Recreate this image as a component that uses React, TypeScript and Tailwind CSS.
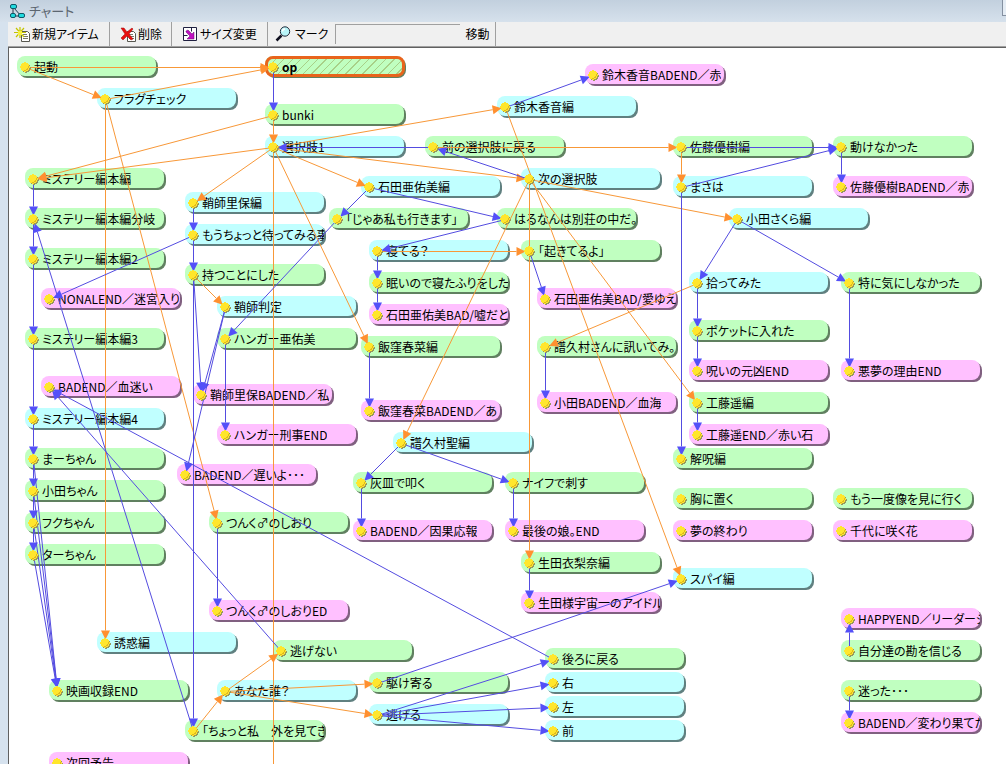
import { useState } from 'react';
import type { ReactNode } from 'react';
import clsx from 'clsx';

type Tone = 'green' | 'cyan' | 'pink';

// id, label, tone, column, row (the chart snaps to an 8px grid)
type Item = [string, string, Tone, number, number];

const GRID = 8;

const items: Item[] = [
  ['start', '起動', 'green', 2, 2],
  ['flag', 'フラグチェック', 'cyan', 12, 6],
  ['op', 'op', 'green', 33, 2],
  ['bunki', 'bunki', 'green', 33, 8],
  ['select1', '選択肢1', 'cyan', 33, 12],
  ['prev', '前の選択肢に戻る', 'green', 53, 12],
  ['suzukiBad', '鈴木香音BADEND／赤', 'pink', 73, 3],
  ['suzuki', '鈴木香音編', 'cyan', 62, 7],
  ['sato', '佐藤優樹編', 'green', 84, 12],
  ['masaha', 'まさは', 'cyan', 84, 17],
  ['stay', '動けなかった', 'green', 104, 12],
  ['satoBad', '佐藤優樹BADEND／赤', 'pink', 104, 17],
  ['mystery1', 'ミステリー編本編', 'green', 3, 16],
  ['mysteryFork', 'ミステリー編本編分岐', 'green', 3, 21],
  ['mystery2', 'ミステリー編本編2', 'green', 3, 26],
  ['nonal', 'NONALEND／迷宮入り', 'pink', 5, 31],
  ['mystery3', 'ミステリー編本編3', 'green', 3, 36],
  ['chimayoi', 'BADEND／血迷い', 'pink', 5, 42],
  ['mystery4', 'ミステリー編本編4', 'cyan', 3, 46],
  ['maa', 'まーちゃん', 'green', 3, 51],
  ['oda', '小田ちゃん', 'green', 3, 55],
  ['fuku', 'フクちゃん', 'green', 3, 59],
  ['taa', 'ターちゃん', 'green', 3, 63],
  ['movie', '映画収録END', 'green', 6, 80],
  ['sayashi', '鞘師里保編', 'cyan', 23, 19],
  ['wait', 'もうちょっと待ってみる事', 'cyan', 23, 23],
  ['hold', '持つことにした', 'green', 23, 28],
  ['judge', '鞘師判定', 'cyan', 27, 32],
  ['hanger', 'ハンガー亜佑美', 'green', 27, 36],
  ['sayashiBad', '鞘師里保BADEND／私', 'pink', 24, 43],
  ['hangerEnd', 'ハンガー刑事END', 'pink', 27, 48],
  ['late', 'BADEND／遅いよ･･･', 'pink', 22, 53],
  ['tsunku', 'つんく♂のしおり', 'green', 26, 59],
  ['tsunkuEnd', 'つんく♂のしおりED', 'pink', 26, 70],
  ['tempt', '誘惑編', 'cyan', 12, 74],
  ['noEscape', '逃げない', 'green', 34, 75],
  ['who', 'あなた誰？', 'cyan', 27, 80],
  ['outside', '「ちょっと私　外を見てき', 'green', 23, 85],
  ['next', '次回予告', 'pink', 6, 89],
  ['ishida', '石田亜佑美編', 'cyan', 45, 17],
  ['metoo', '「じゃあ私も行きます」', 'green', 41, 21],
  ['asleep', '寝てる？', 'cyan', 46, 25],
  ['pretend', '眠いので寝たふりをした', 'green', 46, 29],
  ['ishidaBad1', '石田亜佑美BAD/嘘だと', 'pink', 46, 33],
  ['iikubo', '飯窪春菜編', 'green', 45, 37],
  ['iikuboBad', '飯窪春菜BADEND／あ', 'pink', 45, 45],
  ['fukumura', '譜久村聖編', 'cyan', 49, 49],
  ['ashtray', '灰皿で叩く', 'green', 44, 54],
  ['karma', 'BADEND／因果応報', 'pink', 44, 60],
  ['knife', 'ナイフで刺す', 'green', 63, 54],
  ['lastGirl', '最後の娘。END', 'pink', 63, 60],
  ['select2', '次の選択肢', 'cyan', 65, 16],
  ['villa', 'はるなんは別荘の中だ。', 'green', 62, 21],
  ['awake', '「起きてるよ」', 'green', 65, 25],
  ['ishidaBad2', '石田亜佑美BAD/愛ゆえ', 'pink', 67, 31],
  ['ask', '譜久村さんに訊いてみ。', 'green', 67, 37],
  ['odaBad', '小田BADEND／血海', 'pink', 67, 44],
  ['ikuta', '生田衣梨奈編', 'green', 65, 64],
  ['ikutaEnd', '生田様宇宙一のアイドル', 'pink', 65, 69],
  ['back', '後ろに戻る', 'green', 68, 76],
  ['right', '右', 'cyan', 68, 79],
  ['left', '左', 'cyan', 68, 82],
  ['front', '前', 'cyan', 68, 85],
  ['rush', '駆け寄る', 'green', 46, 79],
  ['escape', '逃げる', 'cyan', 46, 83],
  ['sakura', '小田さくら編', 'cyan', 91, 21],
  ['pickup', '拾ってみた', 'cyan', 86, 29],
  ['pocket', 'ポケットに入れた', 'green', 86, 35],
  ['curse', '呪いの元凶END', 'pink', 86, 40],
  ['kudo', '工藤遥編', 'green', 86, 44],
  ['kudoEnd', '工藤遥END／赤い石', 'pink', 86, 48],
  ['uncurse', '解呪編', 'green', 84, 51],
  ['chest', '胸に置く', 'green', 84, 56],
  ['dreamEnd', '夢の終わり', 'pink', 84, 60],
  ['statue', 'もう一度像を見に行く', 'green', 104, 56],
  ['flower', '千代に咲く花', 'pink', 104, 60],
  ['spy', 'スパイ編', 'cyan', 84, 66],
  ['ignore', '特に気にしなかった', 'green', 105, 29],
  ['nightmare', '悪夢の理由END', 'pink', 105, 40],
  ['happy', 'HAPPYEND／リーダーシ', 'pink', 105, 71],
  ['believe', '自分達の勘を信じる', 'green', 105, 75],
  ['lost', '迷った･･･', 'green', 105, 80],
  ['ruin', 'BADEND／変わり果てた', 'pink', 105, 84],
];

// conditional jumps
const orangeLinks = [
  'start>op', 'start>flag', 'flag>op', 'flag>tempt', 'flag>tsunku',
  'bunki>mystery1', 'bunki>select1',
  'select1>mystery1', 'select1>sayashi', 'select1>ishida', 'select1>iikubo',
  'select1>suzuki', 'select1>select2', 'select1>sato',
  'suzuki>spy', 'select2>sakura', 'select2>fukumura', 'select2>ikuta', 'select2>kudo',
  'asleep>awake', 'pickup>ask', 'sato>masaha', 'hold>judge',
  'outside>who', 'who>noEscape', 'who>rush', 'who>escape',
];

// plain jumps
const blueLinks = [
  'op>bunki', 'prev>select1', 'select2>prev', 'suzuki>suzukiBad',
  'sato>stay', 'masaha>stay', 'stay>satoBad', 'masaha>uncurse',
  'mystery1>mysteryFork', 'mysteryFork>mystery2', 'mystery2>mystery3', 'mystery3>mystery4',
  'mystery4>maa', 'maa>oda', 'oda>fuku', 'fuku>taa',
  'maa>movie', 'oda>movie', 'fuku>movie', 'taa>movie',
  'outside>mysteryFork', 'wait>nonal', 'sayashi>wait', 'wait>hold',
  'hold>outside', 'hold>sayashiBad', 'judge>sayashiBad', 'judge>late',
  'metoo>hanger', 'hanger>hangerEnd', 'tsunku>tsunkuEnd',
  'ishida>metoo', 'ishida>villa', 'villa>asleep', 'asleep>pretend', 'pretend>ishidaBad1',
  'awake>ishidaBad2', 'iikubo>iikuboBad', 'ask>odaBad',
  'fukumura>ashtray', 'fukumura>knife', 'ashtray>karma', 'knife>lastGirl',
  'ikuta>ikutaEnd', 'sakura>pickup', 'sakura>ignore', 'ignore>nightmare',
  'pickup>pocket', 'pocket>curse', 'kudo>kudoEnd',
  'noEscape>chimayoi', 'back>chimayoi', 'rush>spy',
  'escape>back', 'escape>right', 'escape>left', 'escape>front',
  'believe>happy', 'lost>ruin',
];

const toneClass: Record<Tone, string> = {
  green: 'bg-[#c0ffc0] shadow-[2px_2px_0_#608060]',
  cyan: 'bg-[#c0ffff] shadow-[2px_2px_0_#608080]',
  pink: 'bg-[#ffc0ff] shadow-[2px_2px_0_#806080]',
};

const dotOf = new Map(items.map(([id, , , col, row]) => [id, { x: col * GRID, y: row * GRID + 3 }]));

function Link({ link, color, head }: { link: string; color: string; head: string }) {
  const [from, to] = link.split('>');
  const a = dotOf.get(from)!;
  const b = dotOf.get(to)!;
  const len = Math.hypot(b.x - a.x, b.y - a.y);
  const ux = (b.x - a.x) / len;
  const uy = (b.y - a.y) / len;
  const tip = { x: b.x + 0.5 - ux * 4, y: b.y + 0.5 - uy * 4 };
  const base = { x: tip.x - ux * 9, y: tip.y - uy * 9 };
  return (
    <g>
      <line x1={a.x + 0.5} y1={a.y + 0.5} x2={base.x} y2={base.y} stroke={color} />
      <polygon
        fill={head}
        points={`${tip.x},${tip.y} ${base.x - uy * 4.5},${base.y + ux * 4.5} ${base.x + uy * 4.5},${base.y - ux * 4.5}`}
      />
    </g>
  );
}

function Chart() {
  const [selected, setSelected] = useState('op');

  return (
    <main className="relative flex-1 overflow-hidden border-l border-t border-[#606060] bg-white">
      {items.map(([id, label, tone, col, row]) => (
        <button
          key={id}
          onClick={() => setSelected(id)}
          className={clsx(
            'absolute flex h-5 w-[139px] items-center rounded-lg pl-[17px] pt-0.5 text-left',
            toneClass[tone],
            selected === id && 'font-bold'
          )}
          style={{ left: (col - 1) * GRID, top: (row - 1) * GRID }}
        >
          {selected === id && (
            <span className="absolute -right-px -bottom-px left-0 top-0 rounded-lg border-3 border-[#e8641c] bg-[repeating-linear-gradient(135deg,transparent_0px,transparent_5px,#a8d088_5px,#a8d088_6px)]" />
          )}
          <span className="relative overflow-hidden whitespace-nowrap leading-4">{label}</span>
        </button>
      ))}

      <svg className="pointer-events-none absolute inset-0 h-full w-full">
        {/* leaves the visible part of the chart */}
        <line x1="264.5" y1="99" x2="264.5" y2="2000" stroke="#f89838" />
        {orangeLinks.map((link) => (
          <Link key={link} link={link} color="#f89838" head="#ff9030" />
        ))}
        {blueLinks.map((link) => (
          <Link key={link} link={link} color="#544ce0" head="#5450f8" />
        ))}
        <defs>
          <path id="dot" d="M-1-5h2v1h2v1h1v2h1v2h-1v2h-1v1h-2v1h-2v-1h-2v-1h-1v-2h-1v-2h1v-2h1v-1h2z" />
        </defs>
        {items.map(([id]) => {
          const { x, y } = dotOf.get(id)!;
          return (
            <g key={id} shapeRendering="crispEdges">
              <use href="#dot" x={x + 1} y={y + 1} fill="#98985c" />
              <use href="#dot" x={x} y={y} fill="#ffe62c" />
              <path d={`M${x - 1} ${y + 3}h2v-1h1v-1h1v-2h1v2h-1v2h-2v1h-2z`} fill="#e0b820" />
            </g>
          );
        })}
      </svg>
    </main>
  );
}

function ChartIcon() {
  return (
    <svg width="16" height="16" viewBox="0 0 16 16" aria-hidden="true">
      <path d="M4 4v8M5 5l7 8M4 13h9" stroke="#203848" fill="none" />
      <g fill="#20dce0" stroke="#105868">
        <rect x="1.5" y="1.5" width="6" height="4" rx="1.5" />
        <rect x="1.5" y="10.5" width="5" height="4" rx="1.5" />
        <rect x="9.5" y="10.5" width="6" height="4" rx="1.5" />
      </g>
    </svg>
  );
}

function PageShape() {
  return (
    <g>
      <path d="M7.5 5.5h6l2 2v8h-8z" fill="#fff" stroke="#585850" />
      <path d="M9 8.5h4M9 10.5h5M9 12.5h5" stroke="#787868" fill="none" />
    </g>
  );
}

function NewIcon() {
  return (
    <svg width="16" height="16" viewBox="0 0 16 16" aria-hidden="true">
      <PageShape />
      <path d="M6 1v11M0 6.5h12M2 2l8 9M10 2l-8 9" stroke="#c4c400" strokeWidth="1.2" fill="none" />
      <path d="M4 5h4v4H4z" fill="#f8f040" />
    </svg>
  );
}

function DeleteIcon() {
  return (
    <svg width="16" height="16" viewBox="0 0 16 16" aria-hidden="true">
      <PageShape />
      <path d="M1 2l3 0 3 4 5-4 1 1-4 5 4 5-2 1-4-4-4 4-2-2 4-4z" fill="#e81010" stroke="#a00808" strokeWidth="0.5" />
    </svg>
  );
}

function ResizeIcon() {
  return (
    <svg width="16" height="16" viewBox="0 0 16 16" aria-hidden="true">
      <path d="M1.5 1.5h13v13h-13z" fill="#fff" stroke="#202040" />
      <path d="M1.5 9.5h4M9.5 1.5v4" stroke="#202040" />
      <path d="M4 5l2-1 4 4 2-2v7H5l2-2 1-1-4-4z" fill="#c010c0" stroke="#600870" strokeWidth="0.5" />
    </svg>
  );
}

function SearchIcon() {
  return (
    <svg width="16" height="16" viewBox="0 0 16 16" aria-hidden="true">
      <path d="M1.5 14.5l5-5" stroke="#101020" strokeWidth="2.5" />
      <circle cx="10" cy="5.5" r="4.7" fill="#b8f4f8" stroke="#202838" />
      <path d="M7.5 5.5a2.5 2.5 0 0 1 2.5-2.5" stroke="#fff" strokeWidth="1.5" fill="none" />
    </svg>
  );
}

function ToolButton({ icon, label, className }: { icon: ReactNode; label: string; className: string }) {
  return (
    <button className={clsx('flex h-full items-center gap-0.5 whitespace-nowrap border-r border-[#a0a0a0]', className)}>
      {icon}
      {label}
    </button>
  );
}

export default function App() {
  return (
    <div className="flex h-screen flex-col overflow-hidden bg-[#d6e2ee] font-['Noto_Sans_CJK_JP',sans-serif] text-xs text-black [font-feature-settings:'palt']">
      <header className="flex h-[22px] shrink-0 items-center justify-between bg-linear-to-b from-[#c2d0de] to-[#d6e1ec] pl-[9px]">
        <h1 className="flex items-center gap-1 text-[13px] text-[#5c6670]">
          <ChartIcon />
          チャート
        </h1>
        <button aria-label="閉じる" className="h-4 w-1 self-start border-b border-l border-[#8490a0] bg-[#e4ecf4]" />
      </header>

      <div className="ml-2 flex min-h-0 flex-1 flex-col">
        <div className="flex h-[25px] shrink-0 items-center border-b border-[#a0a0a0] bg-[#f0f0f0]">
          <ToolButton icon={<NewIcon />} label="新規アイテム" className="w-[102px] pl-1.5" />
          <ToolButton icon={<DeleteIcon />} label="削除" className="w-[62px] pl-2.5" />
          <ToolButton icon={<ResizeIcon />} label="サイズ変更" className="w-[96px] pl-2.5" />
          <label htmlFor="mark" className="flex w-[67px] items-center gap-1 whitespace-nowrap pl-[7px]">
            <SearchIcon />
            マーク
          </label>
          <input
            id="mark"
            type="text"
            className="h-5 w-[125px] border-l border-t border-[#a0a0a0] bg-[#f0f0f0] px-1 outline-none"
          />
          <button className="h-full w-9 border-r border-[#a0a0a0] text-center">移動</button>
        </div>
        <Chart />
      </div>
    </div>
  );
}
